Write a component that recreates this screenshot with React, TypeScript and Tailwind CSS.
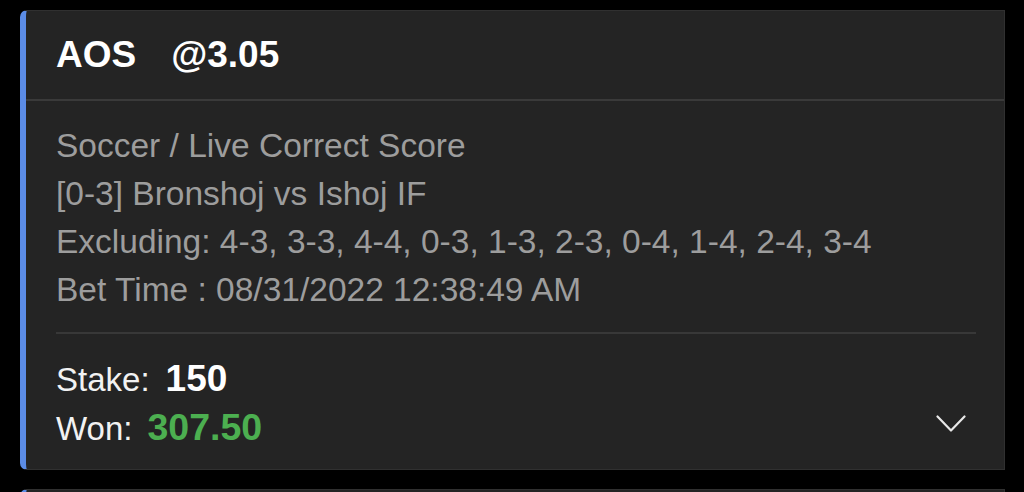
const bet = {
  market: 'AOS',
  odds: '@3.05',
  lines: [
    'Soccer / Live Correct Score',
    '[0-3] Bronshoj vs Ishoj IF',
    'Excluding: 4-3, 3-3, 4-4, 0-3, 1-3, 2-3, 0-4, 1-4, 2-4, 3-4',
    'Bet Time : 08/31/2022 12:38:49 AM',
  ],
  stake: '150',
  won: '307.50',
};

function Chevron() {
  return (
    <svg width="30" height="18" viewBox="0 0 30 18" fill="none" className="text-[#e8e8e8]">
      <path d="M1.5 1.5 L15 15.5 L28.5 1.5" stroke="currentColor" strokeWidth="2.2" strokeLinecap="round" strokeLinejoin="round" />
    </svg>
  );
}

function BetCard() {
  return (
    <div className="rounded-l-[7px] border border-[#303030] border-l-[6px] border-l-[#5b8ce6] bg-[#242424]">
      <div className="flex h-[90px] items-center border-b-[2px] border-[#3a3a3a] pl-[30px] text-[37px] font-bold leading-[44px] text-white">
        <span>{bet.market}</span>
        <span className="ml-[35px]">{bet.odds}</span>
      </div>
      <div className="px-[30px] pt-[21px]">
        <div className="text-[33.5px] leading-[48px] text-[#9d9d9d]">
          {bet.lines.map((line) => (
            <div key={line}>{line}</div>
          ))}
        </div>
        <div className="mt-[18px] h-[2px] w-[920px] bg-[#383838]" />
        <div className="flex items-end justify-between pt-[21px] pb-[18px]">
          <div className="leading-[48px] text-[#f2f2f2]">
            <div className="flex h-[48px] items-baseline">
              <span className="text-[33px]">Stake:</span>
              <span className="ml-[16px] text-[37px] font-bold text-white">{bet.stake}</span>
            </div>
            <div className="flex h-[48px] items-baseline">
              <span className="text-[33px]">Won:</span>
              <span className="ml-[15px] text-[37.5px] font-bold text-[#4caf50]">{bet.won}</span>
            </div>
          </div>
          <div className="mb-[18px] mr-[8px]">
            <Chevron />
          </div>
        </div>
      </div>
    </div>
  );
}

export default function App() {
  return (
    <div
      className="min-h-screen bg-black px-[20px] pt-[10px] pr-[19px]"
      style={{ fontFamily: '"Liberation Sans", Arial, sans-serif' }}
    >
      <BetCard />
      {/* next card peeking in at the bottom */}
      <div className="mt-[19px] h-[40px] rounded-l-[7px] border border-[#303030] border-l-[6px] border-l-[#5b8ce6] bg-[#242424]" />
    </div>
  );
}
